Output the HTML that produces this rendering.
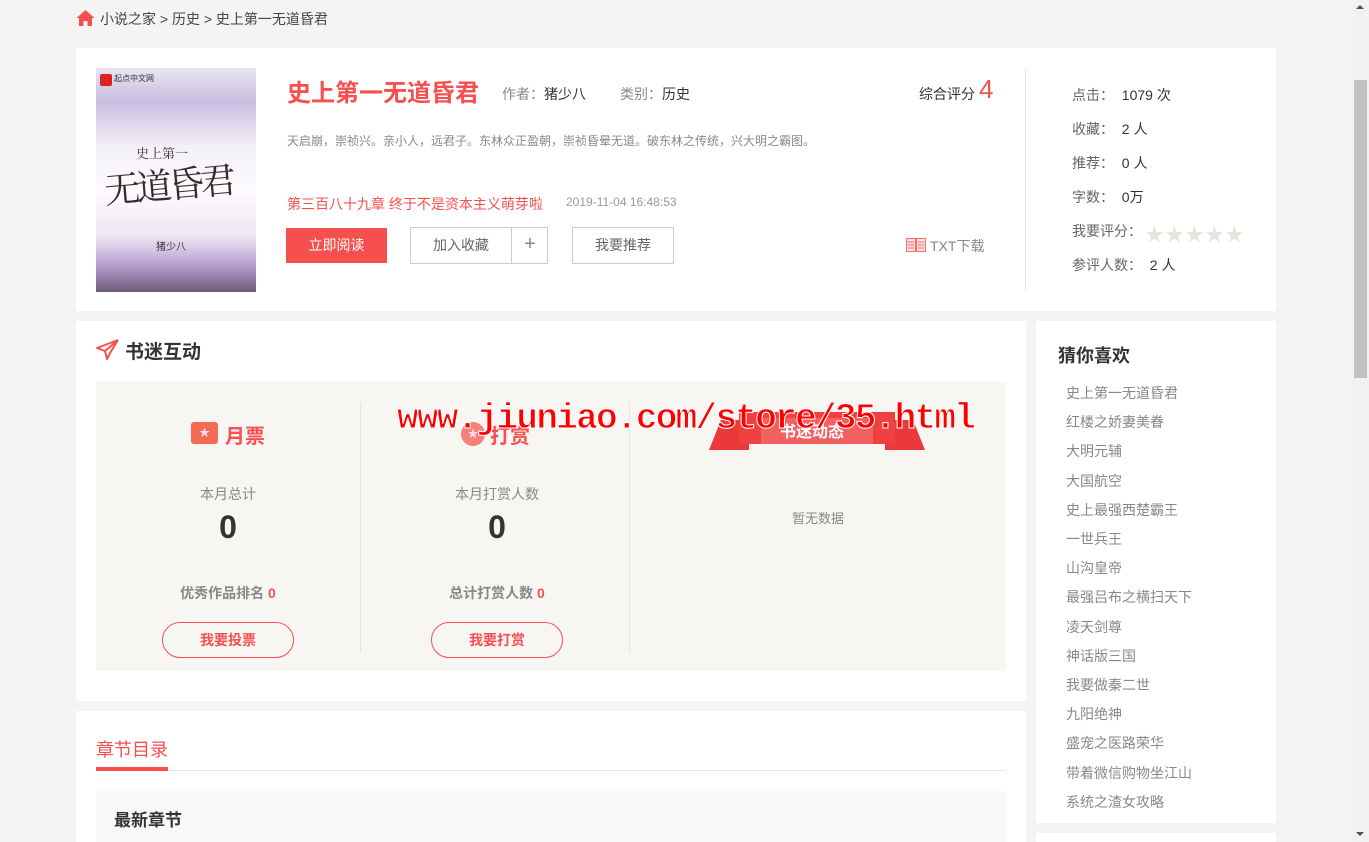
<!DOCTYPE html>
<html><head><meta charset="utf-8"><style>
*{margin:0;padding:0;box-sizing:border-box}
html,body{width:1369px;height:842px;overflow:hidden}
body{background:#f4f4f4;font-family:"Liberation Sans","Noto Sans CJK SC",sans-serif;color:#333;position:relative}
.abs{position:absolute}
.card{position:absolute;background:#fff}
.g{color:#666}
</style></head><body>
<svg class="abs" style="left:76px;top:9px" width="19" height="18" viewBox="0 0 19 18"><path d="M9.5 1 L18.5 9 L16 9 L16 17 L11.5 17 L11.5 12 L7.5 12 L7.5 17 L3 17 L3 9 L0.5 9 Z" fill="#f5504f"/></svg>
<div class="abs" style="left:100px;top:9px;font-size:14px;color:#444">小说之家 &gt; 历史 &gt; 史上第一无道昏君</div>

<div class="card" style="left:76px;top:48px;width:1200px;height:263px"></div>
<div class="abs" style="left:96px;top:68px;width:160px;height:224px;background:linear-gradient(180deg,#e9e6f2 0%,#c9bde0 15%,#f3f0f8 35%,#fdfbfd 55%,#efe6f4 75%,#b79fd0 88%,#6b5a78 100%);overflow:hidden">
 <div class="abs" style="left:4px;top:6px;width:12px;height:12px;background:#d22;border-radius:2px"></div>
 <div class="abs" style="left:18px;top:5px;font-size:8px;color:#333">起点中文网</div>
 <div class="abs" style="left:40px;top:75px;font-size:13px;color:#3a2a3a;font-family:'Noto Serif CJK SC',serif">史上第一</div>
 <div class="abs" style="left:8px;top:90px;font-size:36px;color:#3a2a30;font-family:'Noto Serif CJK SC',serif;letter-spacing:-4px;transform:rotate(-5deg)">无道昏君</div>
 <div class="abs" style="left:60px;top:170px;font-size:10px;color:#333">猪少八</div>
</div>
<div class="abs" style="left:287px;top:73px;font-size:24px;font-weight:bold;color:#f5504f">史上第一无道昏君</div>
<div class="abs" style="left:502px;top:84px;font-size:14px"><span style="color:#888">作者：</span>猪少八</div>
<div class="abs" style="left:620px;top:84px;font-size:14px"><span style="color:#888">类别：</span>历史</div>
<div class="abs" style="left:919px;top:84px;font-size:14px">综合评分</div>
<div class="abs" style="left:979px;top:74px;font-size:26px;color:#f5504f">4</div>
<div class="abs" style="left:287px;top:132px;font-size:12px;color:#888">天启崩，崇祯兴。亲小人，远君子。东林众正盈朝，崇祯昏晕无道。破东林之传统，兴大明之霸图。</div>
<div class="abs" style="left:287px;top:194px;font-size:14px;color:#f5504f">第三百八十九章 终于不是资本主义萌芽啦</div>
<div class="abs" style="left:566px;top:195px;font-size:12px;color:#999">2019-11-04 16:48:53</div>
<div class="abs" style="left:286px;top:228px;width:101px;height:35px;background:#f5504f;color:#fff;font-size:14px;line-height:35px;text-align:center">立即阅读</div>
<div class="abs" style="left:410px;top:227px;width:138px;height:37px;border:1px solid #ccc"></div>
<div class="abs" style="left:511px;top:227px;width:1px;height:37px;background:#ccc"></div>
<div class="abs" style="left:411px;top:227px;width:100px;line-height:37px;font-size:14px;color:#666;text-align:center">加入收藏</div>
<div class="abs" style="left:512px;top:227px;width:36px;line-height:35px;font-size:20px;color:#888;text-align:center">+</div>
<div class="abs" style="left:572px;top:227px;width:102px;height:37px;border:1px solid #ccc;line-height:35px;font-size:14px;color:#666;text-align:center">我要推荐</div>
<svg class="abs" style="left:906px;top:238px" width="20" height="14" viewBox="0 0 20 14"><rect x="0.5" y="0.5" width="9" height="13" fill="#fdd" stroke="#f5706f"/><rect x="10.5" y="0.5" width="9" height="13" fill="#fdd" stroke="#f5706f"/><path d="M2 4h6M2 7h6M2 10h6M12 4h6M12 7h6M12 10h6" stroke="#f5706f"/></svg>
<div class="abs" style="left:930px;top:236px;font-size:14px;color:#888">TXT下载</div>
<div class="abs" style="left:1025px;top:68px;width:1px;height:222px;background:#e6e6e6"></div>
<div class="abs" style="left:1072px;top:78px;font-size:14px;line-height:34px">
<div><span class="g">点击：</span>&nbsp;&nbsp;1079 次</div>
<div><span class="g">收藏：</span>&nbsp;&nbsp;2 人</div>
<div><span class="g">推荐：</span>&nbsp;&nbsp;0 人</div>
<div><span class="g">字数：</span>&nbsp;&nbsp;0万</div>
<div><span class="g">我要评分：</span></div>
<div><span class="g">参评人数：</span>&nbsp;&nbsp;2 人</div>
</div>
<div class="abs" style="left:1145px;top:220px;font-size:19px;color:#e8e4de;letter-spacing:1px">★★★★★</div>

<div class="card" style="left:76px;top:321px;width:950px;height:380px"></div>
<svg class="abs" style="left:96px;top:339px" width="24" height="22" viewBox="0 0 24 22"><path d="M22 1 L1 9 L9 12 L11 20 L14 14 M22 1 L9 12 M22 1 L14 14" fill="none" stroke="#f5504f" stroke-width="2" stroke-linejoin="round"/></svg>
<div class="abs" style="left:125px;top:337px;font-size:19px;font-weight:bold;color:#333">书迷互动</div>
<div class="abs" style="left:96px;top:382px;width:910px;height:289px;background:#f7f6f3"></div>
<div class="abs" style="left:360px;top:402px;width:1px;height:250px;background:#e4e4e4"></div>
<div class="abs" style="left:629px;top:402px;width:1px;height:250px;background:#e4e4e4"></div>
<div class="abs" style="left:191px;top:422px;width:27px;height:22px;background:#f36b54;border-radius:3px;color:#fde;font-size:11px;text-align:center;line-height:22px">★</div>
<div class="abs" style="left:225px;top:420px;font-size:20px;font-weight:bold;color:#f5504f">月票</div>
<div class="abs" style="left:461px;top:422px;width:24px;height:24px;border-radius:50%;background:#f7807a;color:#fde;font-size:11px;text-align:center;line-height:24px">★</div>
<div class="abs" style="left:490px;top:420px;font-size:20px;font-weight:bold;color:#f5504f">打赏</div>
<svg class="abs" style="left:709px;top:412px" width="216" height="38" viewBox="0 0 216 38"><path d="M0 38 L12 8 L40 8 L40 38 Z M216 38 L204 8 L176 8 L176 38 Z" fill="#e9393b"/><rect x="30" y="0" width="156" height="32" fill="#f04040"/><rect x="52" y="6" width="112" height="26" fill="#f36060"/></svg>
<div class="abs" style="left:780px;top:418px;font-size:16px;font-weight:bold;color:#fff">书迷动态</div>
<div class="abs" style="left:96px;top:484px;width:264px;text-align:center;font-size:14px;color:#888">本月总计</div>
<div class="abs" style="left:96px;top:509px;width:264px;text-align:center;font-size:32px;font-weight:bold;color:#333">0</div>
<div class="abs" style="left:96px;top:583px;width:264px;text-align:center;font-size:14px;font-weight:bold;color:#888">优秀作品排名 <span style="color:#f5504f">0</span></div>
<div class="abs" style="left:162px;top:622px;width:132px;height:36px;border:1px solid #f5504f;border-radius:18px;text-align:center;line-height:34px;font-size:14px;font-weight:bold;color:#f5504f">我要投票</div>
<div class="abs" style="left:361px;top:484px;width:272px;text-align:center;font-size:14px;color:#888">本月打赏人数</div>
<div class="abs" style="left:361px;top:509px;width:272px;text-align:center;font-size:32px;font-weight:bold;color:#333">0</div>
<div class="abs" style="left:361px;top:583px;width:272px;text-align:center;font-size:14px;font-weight:bold;color:#888">总计打赏人数 <span style="color:#f5504f">0</span></div>
<div class="abs" style="left:431px;top:622px;width:132px;height:36px;border:1px solid #f5504f;border-radius:18px;text-align:center;line-height:34px;font-size:14px;font-weight:bold;color:#f5504f">我要打赏</div>
<div class="abs" style="left:630px;top:508px;width:376px;text-align:center;font-size:13px;color:#888">暂无数据</div>
<div class="abs" style="left:397px;top:398px;font-size:36px;font-weight:bold;font-family:'Liberation Mono',monospace;color:#f00;-webkit-text-stroke:1px #fff;letter-spacing:-1.7px;white-space:nowrap">www.jiuniao.com/store/35.html</div>

<div class="card" style="left:1036px;top:321px;width:240px;height:502px"></div>
<div class="abs" style="left:1058px;top:342px;font-size:18px;font-weight:bold;color:#333">猜你喜欢</div>
<div class="abs" style="left:1066px;top:379px;font-size:14px;color:#888;line-height:29.2px">
<div>史上第一无道昏君</div><div>红楼之娇妻美眷</div><div>大明元辅</div><div>大国航空</div><div>史上最强西楚霸王</div><div>一世兵王</div><div>山沟皇帝</div><div>最强吕布之横扫天下</div><div>凌天剑尊</div><div>神话版三国</div><div>我要做秦二世</div><div>九阳绝神</div><div>盛宠之医路荣华</div><div>带着微信购物坐江山</div><div>系统之渣女攻略</div>
</div>
<div class="card" style="left:1036px;top:833px;width:240px;height:9px"></div>

<div class="card" style="left:76px;top:711px;width:950px;height:131px"></div>
<div class="abs" style="left:96px;top:736px;font-size:18px;color:#f5504f">章节目录</div>
<div class="abs" style="left:96px;top:770px;width:910px;height:1px;background:#e6e6e6"></div>
<div class="abs" style="left:96px;top:767px;width:72px;height:4px;background:#f5504f"></div>
<div class="abs" style="left:96px;top:791px;width:910px;height:51px;background:#f8f8f8"></div>
<div class="abs" style="left:114px;top:806px;font-size:17px;font-weight:bold;color:#333">最新章节</div>

<div class="abs" style="left:1352px;top:0;width:17px;height:842px;background:#f1f1f1"></div>
<div class="abs" style="left:1354px;top:80px;width:13px;height:298px;background:#c1c1c1"></div>
<div class="abs" style="left:1356px;top:5px;width:0;height:0;border-left:4px solid transparent;border-right:4px solid transparent;border-bottom:4px solid #505050"></div>
<div class="abs" style="left:1356px;top:832px;width:0;height:0;border-left:4px solid transparent;border-right:4px solid transparent;border-top:4px solid #505050"></div>
</body></html>
